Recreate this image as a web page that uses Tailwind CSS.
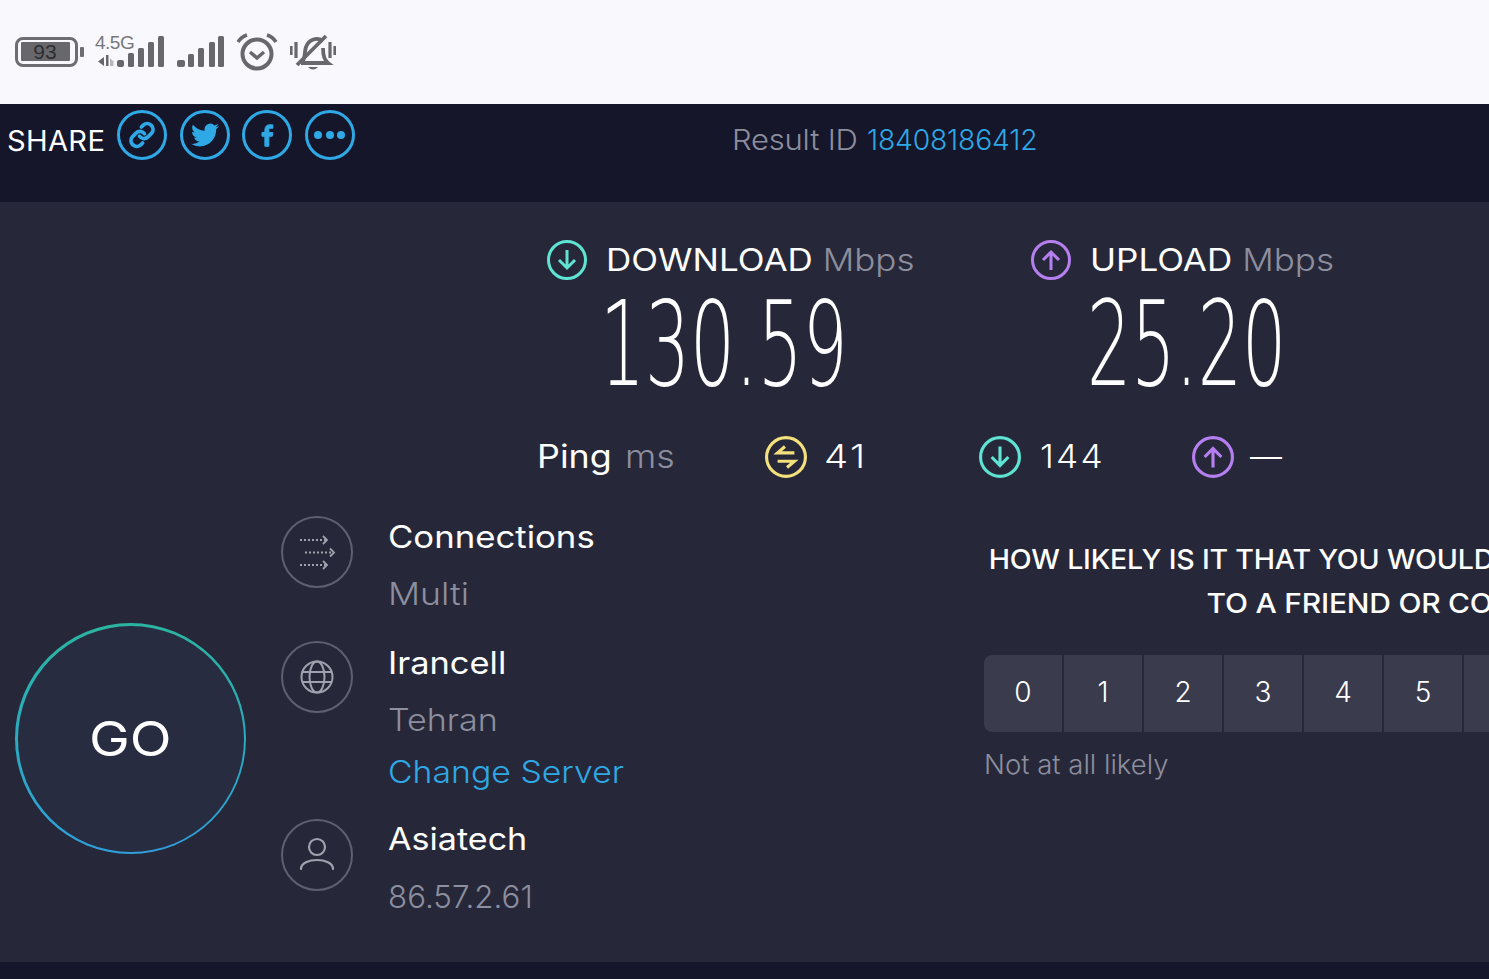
<!DOCTYPE html>
<html>
<head>
<meta charset="utf-8">
<script src="https://cdn.jsdelivr.net/npm/@tailwindcss/browser@4"></script>
</head>
<body class="w-[1489px] h-[979px] overflow-hidden flex flex-col bg-[#262839] font-['Inter','Noto_Sans',sans-serif] text-white">
<header class="h-[104px] shrink-0 bg-[#f9f9fd] flex items-center pl-[15px] pb-[1px] text-[#68686c]">
  <div class="w-[80px] h-[30px] flex items-center shrink-0">
    <div class="w-[63px] h-[30px] border-[3.5px] border-[#6e6e72] rounded-[8px] p-[2.500px]">
      <div class="h-full w-[49px] bg-[#68686c] rounded-[1px] text-[#2e2e30] font-['Liberation_Sans',sans-serif] text-[21px] leading-[20px] text-center">93</div>
    </div>
    <div class="w-[4px] h-[10px] ml-[2px] bg-[#6e6e72] rounded-[1px]"></div>
  </div>
  <div class="relative w-[135px] h-[36px] shrink-0 text-[#77777b]">
    <span class="absolute left-0 top-[-3px] text-[19px] leading-[24px] font-['Liberation_Sans',sans-serif] tracking-[-0.5px]">4.5G</span>
    <svg class="absolute left-0 top-0" width="135" height="36" viewBox="0 0 135 36" fill="#68686c"><path d="M9 23v9l-6-4.500zM11 21h2.500v11H11z"/><path d="M15 32v-8l3.500 3.500V32z" fill="#b8b8bc"/><rect x="22" y="26" width="7" height="7" rx="2"/><rect x="33" y="19" width="6" height="14" rx="1.500"/><rect x="43" y="14" width="6" height="19" rx="1.500"/><rect x="53" y="8" width="6" height="25" rx="1.500"/><rect x="63" y="2" width="6" height="31" rx="1.500"/>
    <rect x="82" y="26" width="8" height="7" rx="2"/><rect x="93" y="20" width="6" height="13" rx="1.500"/><rect x="103" y="14" width="6" height="19" rx="1.500"/><rect x="114" y="8" width="6" height="25" rx="1.500"/><rect x="123" y="2" width="6" height="31" rx="1.500"/></svg>
  </div>
  <svg class="ml-[6px] shrink-0" width="42" height="38" viewBox="0 0 42 38" fill="none" stroke="#68686c"><circle cx="21" cy="21" r="14.500" stroke-width="4"/><path d="M14 19l7 6 7-6" stroke-width="3.500"/><path d="M2 9Q5 4 11 2M40 9Q37 4 31 2" stroke-width="3.500"/></svg>
  <svg class="ml-[12px] mt-[3px] shrink-0" width="46" height="38" viewBox="0 0 46 38" fill="none" stroke="#68686c"><path d="M1 12v9M6 8v16M40 8v16M45 12v9" stroke-width="3.200"/><path d="M11 29c5-3 3-11 5-16 3-8 11-10 17-6M33 14c0 7 1 12 5 15H11" stroke-width="3.800"/><path d="M7 31L36 2" stroke-width="3.800"/><path d="M18 33q5 5 10 0z" fill="#68686c" stroke="none"/></svg>
</header>

<section class="h-[98px] shrink-0 bg-[#15162a] flex items-start">
  <div class="w-[732px] shrink-0 pl-[7px] pt-[6px] flex items-start">
    <span class="text-[28px] leading-[32px] mt-[15px] tracking-[0.3px] w-[110px] origin-left [transform:scaleX(1.04)]">SHARE</span>
    <div class="flex gap-[12.500px]">
      <a class="w-[50px] h-[50px] rounded-full border-[3.500px] border-[#2fa8e6] flex items-center justify-center">
        <svg width="30" height="30" viewBox="0 0 24 24" fill="none" stroke="#2fa8e6" stroke-width="3" stroke-linecap="round"><path d="M10 13a4.500 4.500 0 0 0 6.800.5l3-3a4.700 4.700 0 0 0-6.600-6.600l-1.700 1.700"/><path d="M14 11a4.500 4.500 0 0 0-6.800-.5l-3 3a4.700 4.700 0 0 0 6.600 6.600l1.700-1.700"/></svg>
      </a>
      <a class="w-[50px] h-[50px] rounded-full border-[3.500px] border-[#2fa8e6] flex items-center justify-center">
        <svg width="28" height="28" viewBox="0 0 24 24" fill="#2fa8e6"><path d="M23.950 4.570a10 10 0 0 1-2.820.77 4.960 4.960 0 0 0 2.160-2.720c-.95.550-2 .96-3.130 1.190a4.920 4.920 0 0 0-8.380 4.480C7.690 8.100 4.070 6.130 1.640 3.160a4.820 4.820 0 0 0-.66 2.470c0 1.710.87 3.210 2.190 4.100a4.900 4.900 0 0 1-2.230-.62v.060a4.920 4.920 0 0 0 3.950 4.830 5 5 0 0 1-2.210.080 4.940 4.940 0 0 0 4.600 3.420A9.870 9.870 0 0 1 0 19.540a14 14 0 0 0 7.560 2.210c9.050 0 14-7.500 14-13.980 0-.21 0-.42-.020-.63a9.940 9.940 0 0 0 2.460-2.550z"/></svg>
      </a>
      <a class="w-[50px] h-[50px] rounded-full border-[3.500px] border-[#2fa8e6] flex items-center justify-center">
        <svg width="30" height="30" viewBox="0 0 24 24" fill="#2fa8e6" stroke="#2fa8e6" stroke-width="0.800"><path d="M13.500 21v-8h2.700l.4-3h-3.100V8.100c0-.9.300-1.500 1.500-1.500h1.700V3.900c-.3 0-1.300-.1-2.400-.1-2.400 0-4 1.400-4 4.100V10H8v3h2.300v8z"/></svg>
      </a>
      <a class="w-[50px] h-[50px] rounded-full border-[3.500px] border-[#2fa8e6] flex items-center justify-center gap-[3.500px]">
        <span class="w-[8px] h-[8px] rounded-full bg-[#2fa8e6]"></span><span class="w-[8px] h-[8px] rounded-full bg-[#2fa8e6]"></span><span class="w-[8px] h-[8px] rounded-full bg-[#2fa8e6]"></span>
      </a>
    </div>
  </div>
  <div class="pt-[18px] text-[28px] leading-[36px] font-light tracking-[-0.2px] whitespace-nowrap flex">
    <span class="w-[135px] text-[#8d8e9e] origin-left [transform:scaleX(1.107)]">Result ID</span>
    <span class="text-[#2fa8e6] origin-left [transform:scaleX(1.012)]">18408186412</span>
  </div>
</section>

<main class="flex-1 relative overflow-hidden">
  <div class="pl-[547px] pt-[36px] flex">
    <div class="w-[484px]">
      <div class="flex items-center h-[44px]">
        <svg width="40" height="40" viewBox="0 0 40 40" fill="none" stroke="#5fe3d3" stroke-width="3"><circle cx="20" cy="20" r="18.500"/><path d="M20 10v18M12 20l8 8 8-8"/></svg>
        <span class="ml-[19px] text-[31px] leading-[40px] whitespace-nowrap origin-left [transform:scaleX(1.13)]">DOWNLOAD <span class="text-[#8d8e9e] font-light">Mbps</span></span>
      </div>
      <div class="ml-[53px] w-[240px] h-[108px] leading-[108px] mt-[8px] text-[118px] font-['DejaVu_Sans',sans-serif] font-extralight origin-left [transform:scaleX(0.6)] whitespace-nowrap">130.59</div>
    </div>
    <div>
      <div class="flex items-center h-[44px]">
        <svg width="40" height="40" viewBox="0 0 40 40" fill="none" stroke="#b67ff0" stroke-width="3"><circle cx="20" cy="20" r="18.500"/><path d="M20 30V12M12 20l8-8 8 8"/></svg>
        <span class="ml-[19px] text-[31px] leading-[40px] whitespace-nowrap origin-left [transform:scaleX(1.13)]">UPLOAD <span class="text-[#8d8e9e] font-light">Mbps</span></span>
      </div>
      <div class="ml-[56px] w-[200px] h-[108px] leading-[108px] mt-[8px] text-[118px] font-['DejaVu_Sans',sans-serif] font-extralight origin-left [transform:scaleX(0.59)] whitespace-nowrap">25.20</div>
    </div>
  </div>

  <div class="pl-[537px] mt-[38px] flex items-center h-[42px] text-[32px] whitespace-nowrap">
    <span class="w-[228px]"><span class="inline-block origin-left [transform:scaleX(1.12)]">Ping</span> <span class="inline-block ml-[12px] text-[#8d8e9e] font-light origin-left [transform:scaleX(1.12)]">ms</span></span>
    <svg width="42" height="42" viewBox="0 0 40 40" fill="none" stroke="#f4e07c" stroke-width="3"><circle cx="20" cy="20" r="18.500"/><path d="M28 16H12l7-6M12 24h16l-7 6"/></svg>
    <span class="ml-[17px] w-[155px] tracking-[2px] font-light origin-left [transform:scaleX(1.2)]">41</span>
    <svg width="42" height="42" viewBox="0 0 40 40" fill="none" stroke="#5fe3d3" stroke-width="3"><circle cx="20" cy="20" r="18.500"/><path d="M20 10v18M12 20l8 8 8-8"/></svg>
    <span class="ml-[19px] w-[152px] tracking-[2px] font-light origin-left [transform:scaleX(1.1)]">144</span>
    <svg width="42" height="42" viewBox="0 0 40 40" fill="none" stroke="#b67ff0" stroke-width="3"><circle cx="20" cy="20" r="18.500"/><path d="M20 30V12M12 20l8-8 8 8"/></svg>
    <span class="ml-[16px] font-light">—</span>
  </div>

  <div class="flex mt-[38px]">
    <div class="w-[281px] pl-[15px] pt-[107px] shrink-0">
      <div class="w-[231px] h-[231px] rounded-full p-[2.500px] bg-linear-to-b from-[#2bb5a0] to-[#2f9fdc]">
        <div class="w-full h-full rounded-full bg-[#282c40] flex items-center justify-center text-[48px]"><span class="[transform:scaleX(1.14)]">GO</span></div>
      </div>
    </div>
    <div class="w-[703px] shrink-0">
      <div class="flex h-[125px]">
        <div class="w-[72px] h-[72px] shrink-0 rounded-full border-[2.500px] border-[#5f606f] flex items-center justify-center">
          <svg width="38" height="38" viewBox="0 0 38 38" fill="none" stroke="#a0a1ae" stroke-width="1.800"><path d="M2 7h26M7 19.500h28M2 32h26" stroke-dasharray="2 2"/><path d="M25 3l4 4-4 4M32 15.500l4 4-4 4M25 28l4 4-4 4"/></svg>
        </div>
        <div class="ml-[35px]">
          <div class="text-[31px] leading-[40px] mt-[1px] origin-left [transform:scaleX(1.12)]">Connections</div>
          <div class="text-[31px] leading-[40px] mt-[17px] text-[#8d8e9e] font-light origin-left [transform:scaleX(1.15)]">Multi</div>
        </div>
      </div>
      <div class="flex h-[178px]">
        <div class="w-[72px] h-[72px] shrink-0 rounded-full border-[2.500px] border-[#5f606f] flex items-center justify-center">
          <svg width="36" height="36" viewBox="0 0 36 36" fill="none" stroke="#a0a1ae" stroke-width="2"><circle cx="18" cy="18" r="15.500"/><ellipse cx="18" cy="18" rx="7.500" ry="15.500"/><path d="M3 13h30M3 23h30"/></svg>
        </div>
        <div class="ml-[35px]">
          <div class="text-[31px] leading-[40px] mt-[2px] origin-left [transform:scaleX(1.11)]">Irancell</div>
          <div class="text-[31px] leading-[40px] mt-[17px] text-[#8d8e9e] font-light origin-left [transform:scaleX(1.1)]">Tehran</div>
          <div class="text-[31px] leading-[40px] mt-[12px] text-[#2fa8e6] font-light whitespace-nowrap origin-left [transform:scaleX(1.09)]">Change Server</div>
        </div>
      </div>
      <div class="flex">
        <div class="w-[72px] h-[72px] shrink-0 rounded-full border-[2.500px] border-[#5f606f] flex items-center justify-center">
          <svg width="36" height="36" viewBox="0 0 36 36" fill="none" stroke="#a0a1ae" stroke-width="2.200" stroke-linecap="round"><circle cx="18" cy="10" r="8"/><path d="M2 32c0-12 32-12 32 0"/></svg>
        </div>
        <div class="ml-[35px]">
          <div class="text-[31px] leading-[40px] origin-left [transform:scaleX(1.1)]">Asiatech</div>
          <div class="text-[31px] leading-[40px] mt-[18px] text-[#8d8e9e] font-light origin-left [transform:scaleX(1.01)]">86.57.2.61</div>
        </div>
      </div>
    </div>
    <div class="w-[880px] shrink-0 pt-[22px]">
      <div class="text-[27px] leading-[44px] text-center tracking-[-0.2px] font-medium whitespace-nowrap">
        <div class="[transform:scaleX(1.058)]">HOW LIKELY IS IT THAT YOU WOULD RECOMMEND SPEEDTEST</div>
        <div class="[transform:scaleX(1.11)]">TO A FRIEND OR COLLEAGUE?</div>
      </div>
      <div class="flex gap-[2px] mt-[29px] text-[28px] font-light">
        <div class="w-[78px] h-[77px] pb-[3px] bg-[#3a3c4e] rounded-l-[8px] flex items-center justify-center">0</div>
        <div class="w-[78px] h-[77px] pb-[3px] bg-[#3a3c4e] flex items-center justify-center">1</div>
        <div class="w-[78px] h-[77px] pb-[3px] bg-[#3a3c4e] flex items-center justify-center">2</div>
        <div class="w-[78px] h-[77px] pb-[3px] bg-[#3a3c4e] flex items-center justify-center">3</div>
        <div class="w-[78px] h-[77px] pb-[3px] bg-[#3a3c4e] flex items-center justify-center">4</div>
        <div class="w-[78px] h-[77px] pb-[3px] bg-[#3a3c4e] flex items-center justify-center">5</div>
        <div class="w-[78px] h-[77px] bg-[#3a3c4e]"></div>
      </div>
      <div class="mt-[15px] text-[27px] leading-[36px] text-[#8d8e9e] font-light origin-left [transform:scaleX(1.02)]">Not at all likely</div>
    </div>
  </div>
</main>
<footer class="h-[17px] shrink-0 bg-[#15162a]"></footer>
</body>
</html>
